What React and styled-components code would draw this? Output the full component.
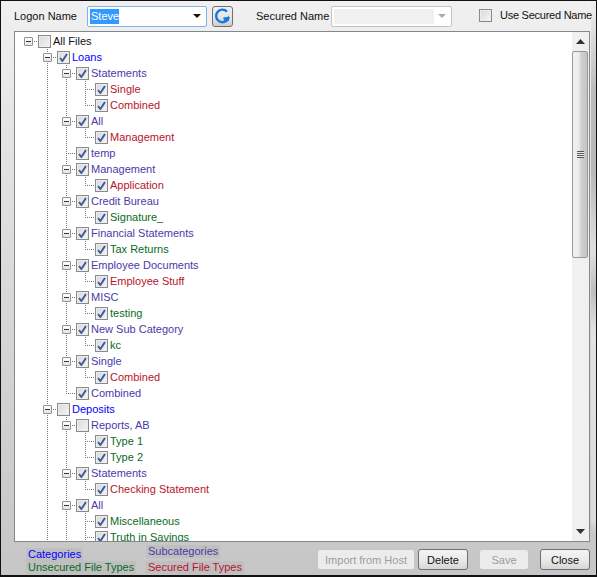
import React from "react";
import styled, { createGlobalStyle } from "styled-components";

const Global = createGlobalStyle`
  html, body { margin: 0; padding: 0; background: #d0d0d0; }
  * { box-sizing: border-box; }
`;

const Window = styled.div`
  width: 597px;
  height: 577px;
  overflow: hidden;
  display: flex;
  flex-direction: column;
  border: 1px solid #111;
  border-bottom-width: 2px;
  padding: 4px 6px 0 13px;
  font-family: "Liberation Sans", Arial, sans-serif;
  font-size: 11px;
  color: #111;
  background:
    linear-gradient(180deg, #efefef 0, #bcbcbc 90px, #b8b8b8 170px, #e0e0e0 250px, #bdbdbd 290px, #e2e2e2 330px, #dcdcdc 520px, transparent 530px) right top / 5px 100% no-repeat,
    linear-gradient(180deg, #f0f0f0 0, #ececec 60px, #e6e6e6 110px, #d8d8d8 300px, #c6c6c6 100%);
`;

const Toolbar = styled.div`
  display: flex;
  align-items: center;
  height: 22px;
  flex: none;
`;

const FieldLabel = styled.span`
  flex: none;
  width: ${({ $w }) => $w}px;
  white-space: nowrap;
`;

const Combo = styled.div`
  display: flex;
  align-items: center;
  flex: none;
  width: ${({ $w }) => $w}px;
  height: 21px;
  padding: 2px;
  background: #fff;
  border: 1px solid ${({ $active }) => ($active ? "#7eb4ea" : "#c4c4c4")};
  border-radius: 2px;
`;

const ComboValue = styled.div`
  flex: 1;
  height: 15px;
`;

const Selected = styled.span`
  display: inline-block;
  width: 29px;
  padding: 0 1px;
  line-height: 15px;
  background: #3399ff;
  color: #fff;
`;

const ComboFill = styled.div`
  width: 100px;
  height: 15px;
  background: #f0f0f0;
`;

const Arrow = styled.span`
  margin-left: auto;
  margin-right: 3px;
  width: 0;
  height: 0;
  border-left: 4px solid transparent;
  border-right: 4px solid transparent;
  border-top: 4px solid ${({ $off }) => ($off ? "#aaa" : "#111")};
`;

const RefreshButton = styled.div`
  display: flex;
  align-items: center;
  justify-content: center;
  flex: none;
  width: 21px;
  height: 21px;
  margin: 0 23px 0 5px;
  border: 1px solid #707070;
  border-radius: 3px;
  background: linear-gradient(180deg, #f2f2f2 0, #e6e6e6 50%, #cfcfcf 100%);
`;

const UseSecured = styled.label`
  display: flex;
  align-items: center;
  gap: 8px;
  margin-left: 27px;
  margin-top: -2px;
  white-space: nowrap;
  letter-spacing: -0.25px;
`;

const TreePanel = styled.div`
  display: flex;
  flex: none;
  height: 511px;
  margin-top: 4px;
  background: #fff;
  border: 1px solid #828790;
`;

const TreeList = styled.div`
  flex: 1;
  overflow: hidden;
  height: 509px;
  padding: 1px 0 0 4px;
`;

const Row = styled.div`
  display: flex;
  align-items: center;
  height: 16px;
`;

const Guide = styled.div`
  width: 19px;
  height: 16px;
  flex: none;
  ${({ $on }) => $on && `
    background-image: linear-gradient(180deg, #777 50%, transparent 50%);
    background-size: 1px 2px;
    background-repeat: repeat-y;
    background-position: 9px 0;
  `}
`;

const Branch = styled.div`
  position: relative;
  width: 19px;
  height: 16px;
  flex: none;
  &::before {
    content: "";
    position: absolute;
    left: 9px;
    top: 0;
    height: ${({ $last }) => ($last ? 8 : 16)}px;
    width: 1px;
    background-image: linear-gradient(180deg, #777 50%, transparent 50%);
    background-size: 1px 2px;
    display: ${({ $root }) => ($root ? "none" : "block")};
  }
  &::after {
    content: "";
    position: absolute;
    left: 9px;
    top: 8px;
    width: 10px;
    height: 1px;
    background-image: linear-gradient(90deg, #777 50%, transparent 50%);
    background-size: 2px 1px;
  }
`;

const Expander = styled.div`
  position: absolute;
  z-index: 1;
  left: 5px;
  top: 4px;
  width: 9px;
  height: 9px;
  border: 1px solid #919191;
  border-radius: 1px;
  background: linear-gradient(180deg, #fff 0, #e4e4e4 100%);
  &::after {
    content: "";
    position: absolute;
    left: 1px;
    top: 3px;
    width: 5px;
    height: 1px;
    background: #333;
  }
`;

const Box = styled.span`
  display: flex;
  align-items: center;
  justify-content: center;
  flex: none;
  width: 13px;
  height: 13px;
  border: 1px solid #8a8a8a;
  background: linear-gradient(135deg, #d8d8d8 0, #f6f6f6 100%);
  box-shadow: inset 0 0 0 1px #ececec;
`;

const NodeLabel = styled.span`
  margin-left: 2px;
  white-space: nowrap;
  color: ${({ $color }) => $color};
`;

const ScrollBar = styled.div`
  display: flex;
  flex-direction: column;
  width: 17px;
  flex: none;
  background: #f0f0f0;
`;

const ScrollArrow = styled.div`
  display: flex;
  align-items: center;
  justify-content: center;
  height: 19px;
  flex: none;
`;

const Thumb = styled.div`
  display: flex;
  align-items: center;
  justify-content: center;
  height: 207px;
  margin: 0 1px 0 0;
  border: 1px solid #979797;
  border-radius: 2px;
  background: linear-gradient(90deg, #f2f2f2 0, #ececec 40%, #cfcfcf 60%, #c4c4c4 100%);
`;

const Grip = styled.div`
  width: 7px;
  height: 7px;
  background-image: linear-gradient(180deg, #555 1px, #eee 1px);
  background-size: 7px 2px;
`;

const Track = styled.div`
  flex: 1;
`;

const Footer = styled.div`
  display: flex;
  align-items: flex-start;
  margin: 3px 0 0 12px;
`;

const LegendColumn = styled.div`
  display: flex;
  flex-direction: column;
  align-items: flex-start;
  width: 120px;
  flex: none;
  padding-top: ${({ $top }) => $top}px;
`;

const LegendItem = styled.span`
  height: 13px;
  line-height: 13px;
  padding: 0 2px;
  margin-top: ${({ $mt }) => $mt || 0}px;
  white-space: nowrap;
  background: #bfbfbf;
  color: ${({ $color }) => $color};
`;

const Buttons = styled.div`
  display: flex;
  margin: 4px 0 0 auto;
`;

const Button = styled.div`
  display: flex;
  align-items: center;
  justify-content: center;
  width: ${({ $w }) => $w}px;
  height: 21px;
  margin-left: ${({ $gap }) => $gap}px;
  border-radius: 3px;
  border: 1px solid ${({ $off }) => ($off ? "#c6c6c6" : "#6f6f6f")};
  color: ${({ $off }) => ($off ? "#9c9c9c" : "#111")};
  background: ${({ $off }) =>
    $off ? "#ececec" : "linear-gradient(180deg, #f4f4f4 0, #ebebeb 50%, #d6d6d6 100%)"};
`;

const BLUE = "#0000ff";
const PURPLE = "#4b3aa8";
const RED = "#b8142c";
const GREEN = "#0a6b1e";

// [level, label, colour, checked, has children]
const rows = [
  [0, "All Files", "#111", false, true],
  [1, "Loans", BLUE, true, true],
  [2, "Statements", PURPLE, true, true],
  [3, "Single", RED, true],
  [3, "Combined", RED, true],
  [2, "All", PURPLE, true, true],
  [3, "Management", RED, true],
  [2, "temp", PURPLE, true],
  [2, "Management", PURPLE, true, true],
  [3, "Application", RED, true],
  [2, "Credit Bureau", PURPLE, true, true],
  [3, "Signature_", GREEN, true],
  [2, "Financial Statements", PURPLE, true, true],
  [3, "Tax Returns", GREEN, true],
  [2, "Employee Documents", PURPLE, true, true],
  [3, "Employee Stuff", RED, true],
  [2, "MISC", PURPLE, true, true],
  [3, "testing", GREEN, true],
  [2, "New Sub Category", PURPLE, true, true],
  [3, "kc", GREEN, true],
  [2, "Single", PURPLE, true, true],
  [3, "Combined", RED, true],
  [2, "Combined", PURPLE, true],
  [1, "Deposits", BLUE, false, true],
  [2, "Reports, AB", PURPLE, false, true],
  [3, "Type 1", GREEN, true],
  [3, "Type 2", GREEN, true],
  [2, "Statements", PURPLE, true, true],
  [3, "Checking Statement", RED, true],
  [2, "All", PURPLE, true, true],
  [3, "Miscellaneous", GREEN, true],
  [3, "Truth in Savings", GREEN, true],
];

// the list is cut off by the scrollbar, so the open branches run on below it
const OPEN_AT_END = [false, true, true, true];

const hasNextSibling = (index, level) => {
  for (let i = index + 1; i < rows.length; i++) {
    if (rows[i][0] < level) return false;
    if (rows[i][0] === level) return true;
  }
  return OPEN_AT_END[level];
};

const Tick = () => (
  <svg width="9" height="9" viewBox="0 0 9 9">
    <path d="M1 5 L3.4 8 L8 1" fill="none" stroke="#3a5a9c" strokeWidth="1.9" />
  </svg>
);

const TreeRow = ({ index }) => {
  const [level, label, color, checked, parent] = rows[index];
  const guides = [];
  for (let l = 0; l < level; l++) {
    let on = false;
    for (let i = index; i >= 0; i--) {
      if (rows[i][0] === l) {
        on = hasNextSibling(i, l);
        break;
      }
    }
    guides.push(<Guide key={l} $on={on} />);
  }
  return (
    <Row>
      {guides}
      <Branch $root={level === 0} $last={!hasNextSibling(index, level)}>
        {parent && <Expander />}
      </Branch>
      <Box>{checked && <Tick />}</Box>
      <NodeLabel $color={color}>{label}</NodeLabel>
    </Row>
  );
};

const App = () => (
  <Window>
    <Global />
    <Toolbar>
      <FieldLabel $w={73}>Logon Name</FieldLabel>
      <Combo $w={120} $active>
        <ComboValue>
          <Selected>Steve</Selected>
        </ComboValue>
        <Arrow />
      </Combo>
      <RefreshButton>
        <svg width="17" height="17" viewBox="0 0 17 17">
          <path
            d="M13 3.6 A6.3 6.3 0 1 0 14.2 10.5 H9.5"
            fill="none"
            stroke="#1478e0"
            strokeWidth="2.4"
          />
          <path d="M14.8 7.5 V13 H9.5 Z" fill="#1478e0" />
        </svg>
      </RefreshButton>
      <FieldLabel $w={75}>Secured Name</FieldLabel>
      <Combo $w={121}>
        <ComboFill />
        <Arrow $off />
      </Combo>
      <UseSecured>
        <Box />
        Use Secured Name
      </UseSecured>
    </Toolbar>
    <TreePanel>
      <TreeList>
        {rows.map((_, i) => (
          <TreeRow key={i} index={i} />
        ))}
      </TreeList>
      <ScrollBar>
        <ScrollArrow>
          <svg width="9" height="5" viewBox="0 0 9 5">
            <path d="M4.5 0 L9 5 H0 Z" fill="#333" />
          </svg>
        </ScrollArrow>
        <Thumb>
          <Grip />
        </Thumb>
        <Track />
        <ScrollArrow>
          <svg width="9" height="5" viewBox="0 0 9 5">
            <path d="M0 0 H9 L4.5 5 Z" fill="#333" />
          </svg>
        </ScrollArrow>
      </ScrollBar>
    </TreePanel>
    <Footer>
      <LegendColumn $top={3}>
        <LegendItem $color={BLUE}>Categories</LegendItem>
        <LegendItem $color={GREEN}>Unsecured File Types</LegendItem>
      </LegendColumn>
      <LegendColumn $top={0}>
        <LegendItem $color={PURPLE}>Subcategories</LegendItem>
        <LegendItem $color={RED} $mt={3}>Secured File Types</LegendItem>
      </LegendColumn>
      <Buttons>
        <Button $w={98} $off>Import from Host</Button>
        <Button $w={50} $gap={3}>Delete</Button>
        <Button $w={50} $gap={11} $off>Save</Button>
        <Button $w={50} $gap={11}>Close</Button>
      </Buttons>
    </Footer>
  </Window>
);

export default App;
